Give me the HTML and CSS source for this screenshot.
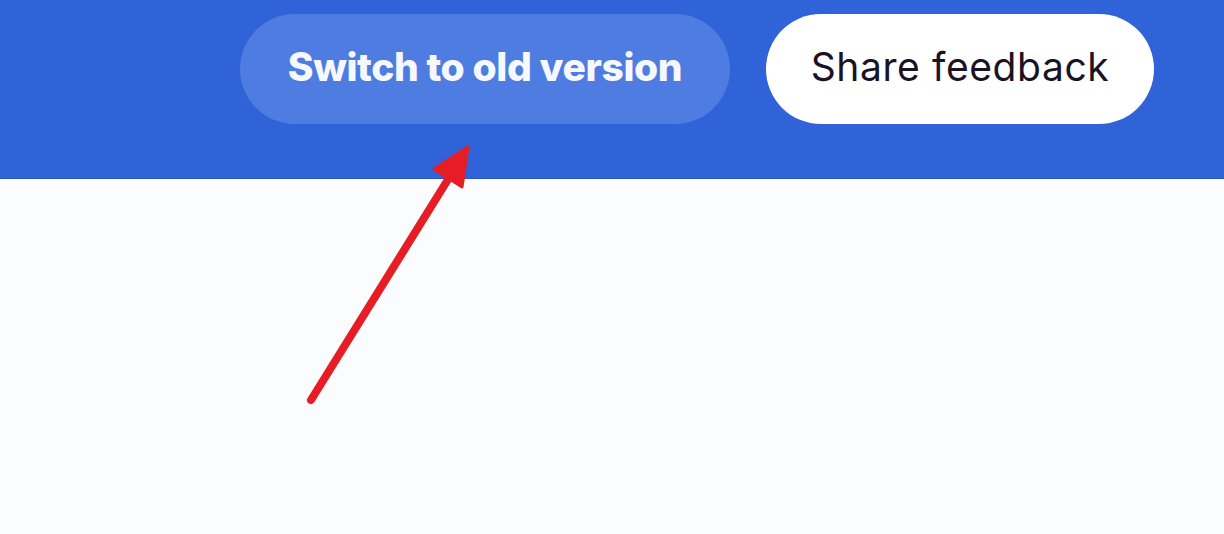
FILE: index.html
```html
<!DOCTYPE html>
<html lang="en">
  <head>
    <meta charset="utf-8" />
    <meta name="viewport" content="width=device-width, initial-scale=1.0" />
    <title>Switch version</title>
    <link rel="stylesheet" href="styles.css">
  </head>
  <body>
    <div class="page">
      <header class="top-bar">
        <button class="btn btn-old">Switch to old version</button>
        <button class="btn btn-feedback">Share feedback</button>
      </header>
      <main class="content"></main>

      <svg class="pointer" width="1224" height="534" viewBox="0 0 1224 534">
        <line x1="311" y1="400" x2="452" y2="173" stroke="#e61d25" stroke-width="8" stroke-linecap="round" />
        <polygon points="468,147 434,169 462,187" fill="#e61d25" stroke="#e61d25" stroke-width="3" stroke-linejoin="round" />
      </svg>
    </div>
  </body>
</html>
```

FILE: styles.css
```css
body {
  margin: 0;
  background-color: #fbfcfe;
  font-family: "Inter", "Liberation Sans", sans-serif;
}
.page {
  position: relative;
  width: 1224px;
  height: 534px;
  overflow: hidden;
}
.top-bar {
  display: flex;
  justify-content: flex-end;
  align-items: flex-start;
  gap: 36px;
  height: 179px;
  box-sizing: border-box;
  padding: 14px 70px 0 0;
  background-color: #3163d8;
  border-bottom: 1px solid #2a57c4;
}
.btn {
  height: 110px;
  border: none;
  border-radius: 55px;
  font-family: inherit;
  padding: 0 0 6px;
  cursor: pointer;
}
.btn-old {
  width: 490px;
  background-color: #4e7ce0;
  color: #f6f8ff;
  font-size: 39px;
  font-weight: 800;
  letter-spacing: -0.4px;
}
.btn-feedback {
  width: 388px;
  background-color: #ffffff;
  color: #1b1224;
  font-size: 39px;
  font-weight: 400;
  letter-spacing: 0.6px;
}
.content {
  height: 355px;
}
.pointer {
  position: absolute;
  left: 0;
  top: 0;
  pointer-events: none;
}
```
